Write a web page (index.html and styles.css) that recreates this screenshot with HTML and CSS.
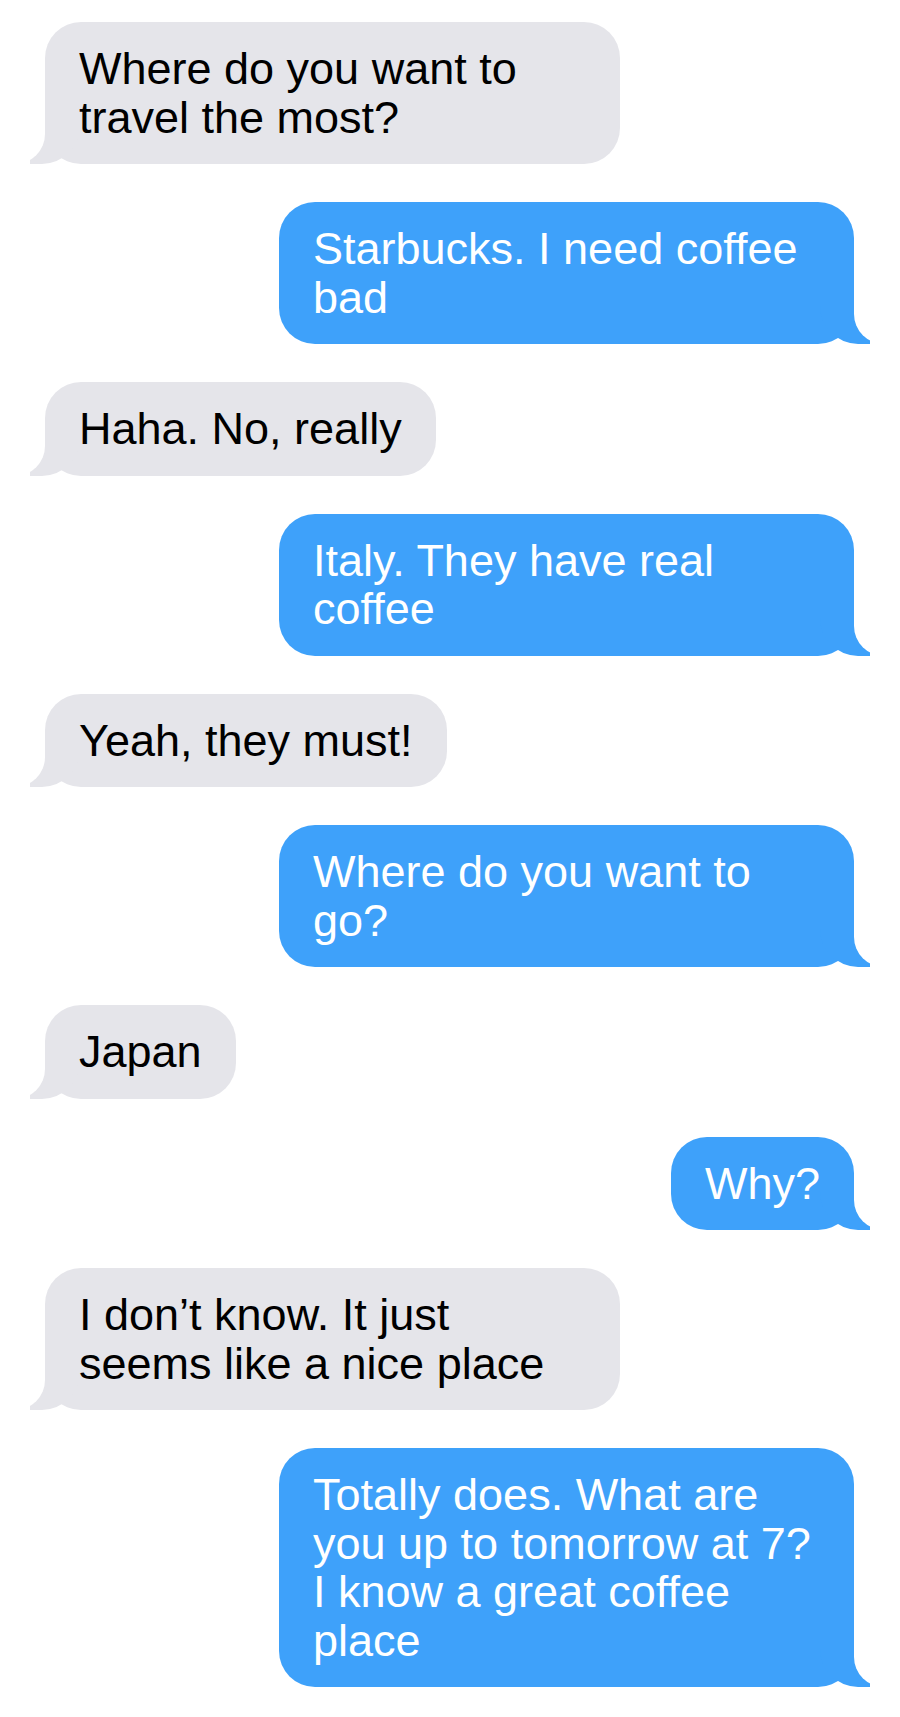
FILE: index.html
```html
<!DOCTYPE html>
<html lang="en">
<head>
<meta charset="utf-8">
<title>Messages</title>
<link rel="stylesheet" href="styles.css">
</head>
<body>
<main class="thread">
  <div class="bubble them">Where do you want to travel the most?</div>
  <div class="bubble me">Starbucks. I need coffee bad</div>
  <div class="bubble them">Haha. No, really</div>
  <div class="bubble me">Italy. They have real coffee</div>
  <div class="bubble them">Yeah, they must!</div>
  <div class="bubble me">Where do you want to go?</div>
  <div class="bubble them">Japan</div>
  <div class="bubble me">Why?</div>
  <div class="bubble them">I don’t know. It just seems like a nice place</div>
  <div class="bubble me">Totally does. What are you up to tomorrow at 7? I know a great coffee place</div>
</main>
</body>
</html>
```

FILE: styles.css
```css
html, body {
  margin: 0;
  padding: 0;
  background: #ffffff;
}

.thread {
  display: flex;
  flex-direction: column;
  gap: 38px;
  padding: 22px 46px 31px 45px;
  font-family: "Liberation Sans", Arial, sans-serif;
  font-size: 45px;
  line-height: 48.5px;
}

.bubble {
  position: relative;
  isolation: isolate;
  max-width: 575px;
  box-sizing: border-box;
  padding: 23px 34px 22px 34px;
  border-radius: 36px;
}

.bubble::before,
.bubble::after {
  content: "";
  position: absolute;
  bottom: 0;
  z-index: -1;
}

.them {
  align-self: flex-start;
  background: #e5e5ea;
  color: #000000;
}

.them::before {
  left: -15px;
  width: 50px;
  height: 50px;
  background: #e5e5ea;
  border-bottom-right-radius: 38px;
}

.them::after {
  left: -30px;
  width: 30px;
  height: 50px;
  background: #ffffff;
  border-bottom-right-radius: 30px;
}

.me {
  align-self: flex-end;
  background: #3ea1fa;
  color: #ffffff;
}

.me::before {
  right: -16px;
  width: 50px;
  height: 50px;
  background: #3ea1fa;
  border-bottom-left-radius: 38px;
}

.me::after {
  right: -30px;
  width: 30px;
  height: 50px;
  background: #ffffff;
  border-bottom-left-radius: 30px;
}
```
